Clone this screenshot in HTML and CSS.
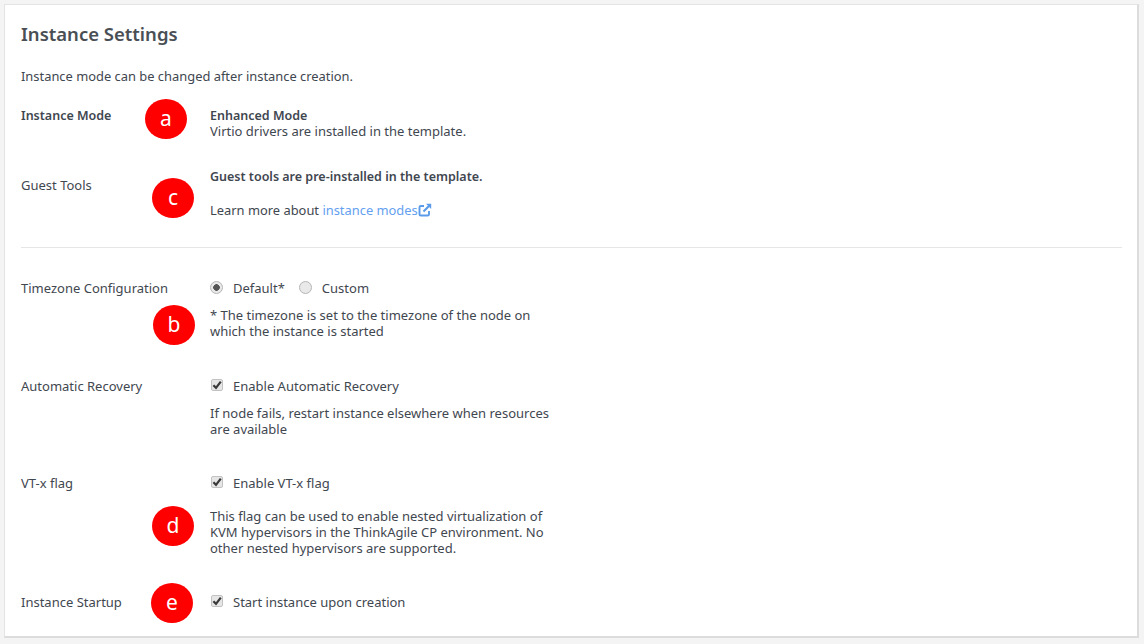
FILE: index.html
```html
<!DOCTYPE html>
<html lang="en">
<head>
<meta charset="utf-8">
<title>Instance Settings</title>
<link rel="stylesheet" href="styles.css">
</head>
<body>
<main class="card">
  <h1 class="title">Instance Settings</h1>
  <p class="intro">Instance mode can be changed after instance creation.</p>

  <div class="row row-mode">
    <div class="label label-strong">Instance Mode</div>
    <div class="value">
      <div class="strong">Enhanced Mode</div>
      <div>Virtio drivers are installed in the template.</div>
    </div>
  </div>

  <div class="row row-guest">
    <div class="label label-guest">Guest Tools</div>
    <div class="value">
      <div class="strong">Guest tools are pre-installed in the template.</div>
      <div class="learn">Learn more about <a class="link" href="#">instance modes<svg class="ext" viewBox="0 0 14 14" width="14" height="14" aria-hidden="true"><path d="M11 8v3.2a1.3 1.3 0 0 1-1.3 1.3H2.8a1.3 1.3 0 0 1-1.3-1.3V4.3A1.3 1.3 0 0 1 2.8 3H6" fill="none" stroke="#5b9bea" stroke-width="1.9"/><path d="M5.5 8.5 11.5 2.5" fill="none" stroke="#5b9bea" stroke-width="2.2"/><path d="M8 .8h5.2V6z" fill="#5b9bea"/></svg></a></div>
    </div>
  </div>

  <hr class="rule">

  <div class="row row-tz">
    <div class="label">Timezone Configuration</div>
    <div class="value">
      <div class="options">
        <span class="radio radio-on"></span><span class="opt-text">Default*</span>
        <span class="radio"></span><span class="opt-text">Custom</span>
      </div>
      <div class="help">* The timezone is set to the timezone of the node on<br>which the instance is started</div>
    </div>
  </div>

  <div class="row row-recovery">
    <div class="label">Automatic Recovery</div>
    <div class="value">
      <div class="options"><span class="check"><svg viewBox="0 0 12 12" width="12" height="12" aria-hidden="true"><path d="M2.4 6.2 5 8.8 9.8 2.6" fill="none" stroke="#3a3a3a" stroke-width="2.2"/></svg></span><span class="opt-text">Enable Automatic Recovery</span></div>
      <div class="help">If node fails, restart instance elsewhere when resources<br>are available</div>
    </div>
  </div>

  <div class="row row-vtx">
    <div class="label">VT-x flag</div>
    <div class="value">
      <div class="options"><span class="check"><svg viewBox="0 0 12 12" width="12" height="12" aria-hidden="true"><path d="M2.4 6.2 5 8.8 9.8 2.6" fill="none" stroke="#3a3a3a" stroke-width="2.2"/></svg></span><span class="opt-text">Enable VT-x flag</span></div>
      <div class="help help-wide">This flag can be used to enable nested virtualization of<br>KVM hypervisors in the ThinkAgile CP environment. No<br>other nested hypervisors are supported.</div>
    </div>
  </div>

  <div class="row row-start">
    <div class="label">Instance Startup</div>
    <div class="value">
      <div class="options"><span class="check"><svg viewBox="0 0 12 12" width="12" height="12" aria-hidden="true"><path d="M2.4 6.2 5 8.8 9.8 2.6" fill="none" stroke="#3a3a3a" stroke-width="2.2"/></svg></span><span class="opt-text">Start instance upon creation</span></div>
    </div>
  </div>

  <span class="pin pin-a">a</span>
  <span class="pin pin-c">c</span>
  <span class="pin pin-b">b</span>
  <span class="pin pin-d">d</span>
  <span class="pin pin-e">e</span>
</main>
</body>
</html>
```
FILE: styles.css
```css
* { box-sizing: border-box; }
html, body { height: 100%; }
body {
  margin: 0;
  padding: 4px 4px 0;
  background: #f4f4f4;
  font-family: "Noto Sans", "Open Sans", "Liberation Sans", sans-serif;
  font-size: 13px;
  line-height: 16px;
  color: #3f4750;
  overflow: hidden;
}
.card {
  position: relative;
  width: 1135px;
  height: 634px;
  padding: 16px 15px 0 16px;
  background: #fff;
  border: 1px solid #e4e4e4;
  border-right: 2px solid #dcdcdc;
  border-bottom: 2px solid #dcdcdc;
}
.title {
  margin: 0;
  font-size: 18.5px;
  line-height: 26px;
  font-weight: 600;
  color: #4a4f55;
}
.intro { margin: 21px 0 0; font-size: 12.9px; }
.row { display: flex; }
.label { width: 189px; flex: none; }
.label-strong, .strong { font-weight: 600; font-size: 12.5px; }
.strong { line-height: 15px; }
.label-guest { padding-top: 8px; }
.value { flex: 1; }
.row-mode { margin-top: 24px; }
.row-guest { margin-top: 30px; }
.learn { margin-top: 18px; font-size: 12.9px; }
.link { color: #649ff0; text-decoration: none; }
.ext { vertical-align: -2px; }
.rule {
  margin: 29px 0 0;
  border: 0;
  border-top: 1px solid #e6e6e6;
}
.row-tz { margin-top: 32px; }
.row-recovery { margin-top: 39px; }
.row-vtx { margin-top: 38px; }
.row-start { margin-top: 38px; }
.options { display: flex; align-items: center; height: 16px; }
.opt-text { margin-left: 10px; margin-right: 14px; }
.radio {
  width: 13px;
  height: 13px;
  border-radius: 50%;
  background: #e9e9e9;
  border: 1px solid #b5b5b5;
  flex: none;
  position: relative;
  top: -1px;
}
.radio-on {
  background: radial-gradient(circle, #555 0 3px, #e9e9e9 3.6px);
}
.check {
  width: 12px;
  height: 12px;
  border-radius: 2px;
  background: #e6e6e6;
  border: 1px solid #c2c2c2;
  flex: none;
  display: flex;
  align-items: center;
  justify-content: center;
  position: relative;
  top: -1px;
  margin-left: 1px;
}
.check svg { flex: none; }
.help { margin-top: 11px; }
.help-wide { margin-top: 17px; }
.pin {
  position: absolute;
  width: 42px;
  height: 40px;
  border-radius: 50%;
  background: #f00;
  color: #fff;
  font-size: 21px;
  line-height: 38px;
  text-align: center;
}
.pin-a { left: 140px; top: 94px; }
.pin-c { left: 147px; top: 173px; }
.pin-b { left: 148px; top: 300px; }
.pin-d { left: 147px; top: 501px; }
.pin-e { left: 146px; top: 578px; }
```
